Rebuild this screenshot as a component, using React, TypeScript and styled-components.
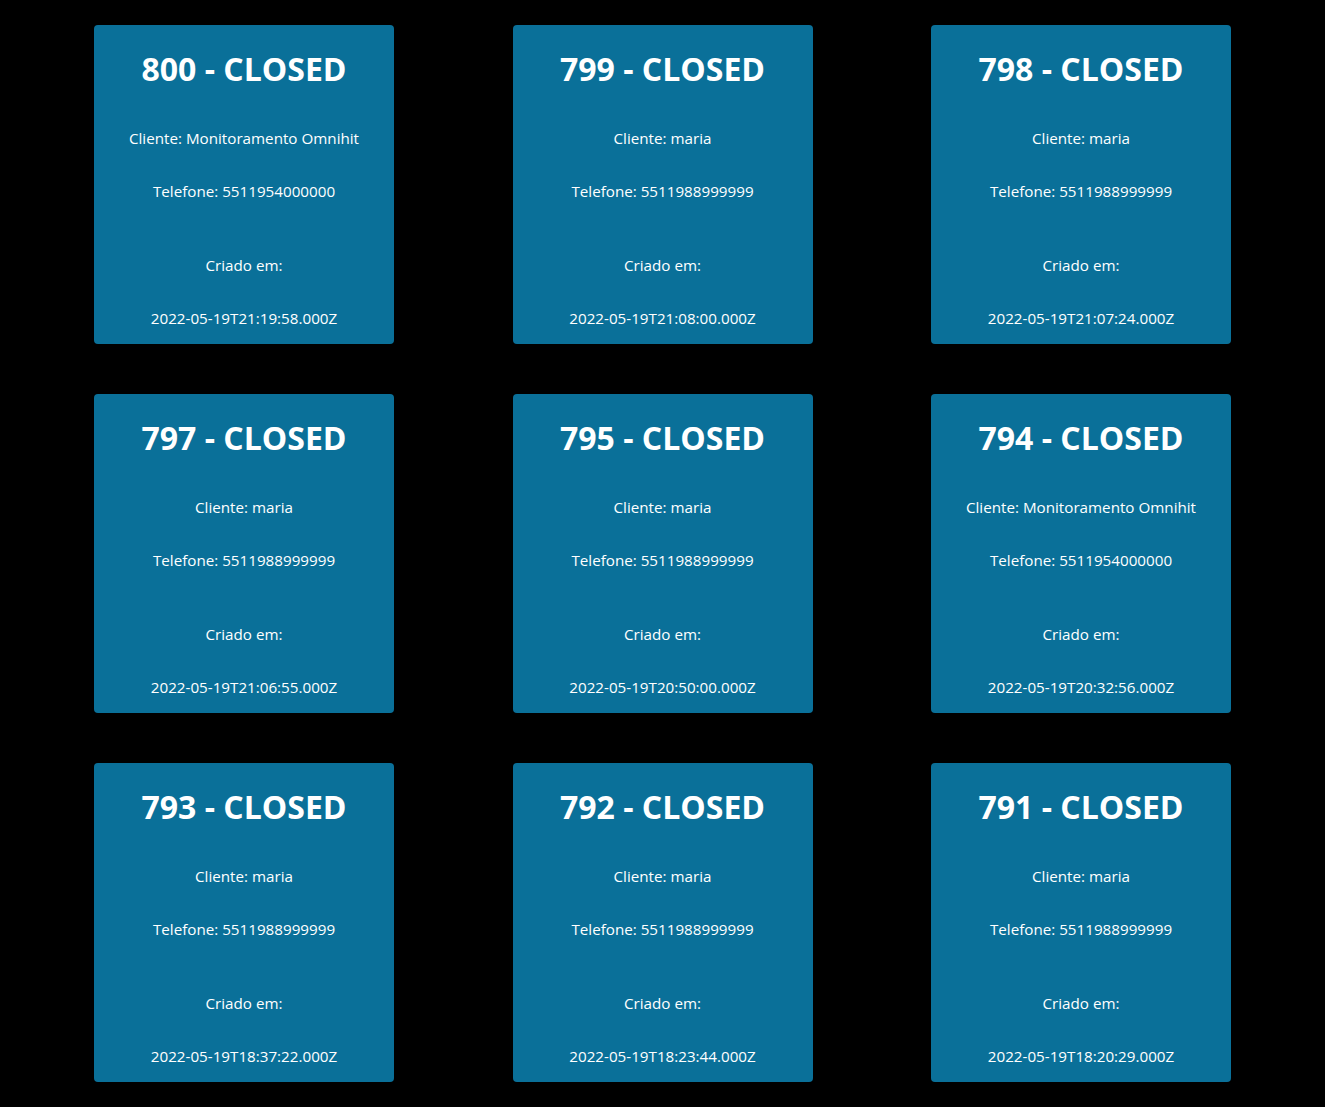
import { createGlobalStyle, styled } from 'styled-components';

const GlobalStyle = createGlobalStyle`
    html, body {
        margin: 0;
        padding: 0;
        background: #000;
    }
    body {
        font-family: 'Open Sans', 'Noto Sans', sans-serif;
    }
`;

const Page = styled.div`
    min-height: 1107px;
    background: #000;
    padding: 25px 0 26px;
    box-sizing: border-box;
`;

const Grid = styled.div`
    display: grid;
    grid-template-columns: repeat(3, 300px);
    column-gap: 118.5px;
    row-gap: 50px;
    justify-content: center;
`;

const Card = styled.div`
    height: 319px;
    box-sizing: border-box;
    background: #0a7099;
    border-radius: 4px;
    color: #fff;
    display: flex;
    flex-direction: column;
    align-items: center;
    text-align: center;
`;

const Title = styled.h1`
    margin: 24px 0 0;
    font-size: 32px;
    line-height: 40px;
    font-weight: 700;
`;

const Line = styled.p<{ $gap: number }>`
    margin: ${(p) => p.$gap}px 0 0;
    font-size: 15.2px;
    line-height: 20px;
`;

type Ticket = {
    id: number;
    cliente: string;
    telefone: string;
    criado: string;
};

const tickets: Ticket[] = [
    { id: 800, cliente: 'Monitoramento Omnihit', telefone: '5511954000000', criado: '2022-05-19T21:19:58.000Z' },
    { id: 799, cliente: 'maria', telefone: '5511988999999', criado: '2022-05-19T21:08:00.000Z' },
    { id: 798, cliente: 'maria', telefone: '5511988999999', criado: '2022-05-19T21:07:24.000Z' },
    { id: 797, cliente: 'maria', telefone: '5511988999999', criado: '2022-05-19T21:06:55.000Z' },
    { id: 795, cliente: 'maria', telefone: '5511988999999', criado: '2022-05-19T20:50:00.000Z' },
    { id: 794, cliente: 'Monitoramento Omnihit', telefone: '5511954000000', criado: '2022-05-19T20:32:56.000Z' },
    { id: 793, cliente: 'maria', telefone: '5511988999999', criado: '2022-05-19T18:37:22.000Z' },
    { id: 792, cliente: 'maria', telefone: '5511988999999', criado: '2022-05-19T18:23:44.000Z' },
    { id: 791, cliente: 'maria', telefone: '5511988999999', criado: '2022-05-19T18:20:29.000Z' },
];

function TicketCard({ ticket }: { ticket: Ticket }) {
    return (
        <Card>
            <Title>{ticket.id} - CLOSED</Title>
            <Line $gap={39}>Cliente: {ticket.cliente}</Line>
            <Line $gap={33}>Telefone: {ticket.telefone}</Line>
            <Line $gap={54}>Criado em:</Line>
            <Line $gap={33}>{ticket.criado}</Line>
        </Card>
    );
}

export default function App() {
    return (
        <>
            <GlobalStyle />
            <Page>
                <Grid>
                    {tickets.map((t) => (
                        <TicketCard key={t.id} ticket={t} />
                    ))}
                </Grid>
            </Page>
        </>
    );
}
